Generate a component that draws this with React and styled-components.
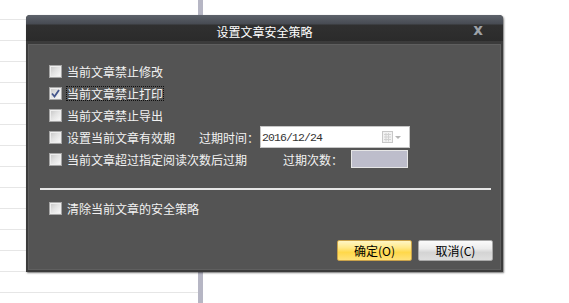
import React from 'react';
import styled, { createGlobalStyle, css } from 'styled-components';

const GlobalStyle = createGlobalStyle`
  html, body { margin: 0; padding: 0; background: #fff; }
  body { font-family: "Noto Sans CJK SC", "Noto Sans", sans-serif; }
  * { box-sizing: border-box; }
`;

const Page = styled.div`
  position: relative;
  width: 569px;
  height: 303px;
  overflow: hidden;
  display: flex;
  background: #fff;
`;

const ListPane = styled.div`
  width: 198px;
  margin-top: -1px;
  display: flex;
  flex-direction: column;
  flex: none;
`;

const ListRow = styled.div`
  flex: none;
  height: 21px;
  border-bottom: 1px solid #e6e6e6;
`;

const VBar = styled.div`
  width: 5px;
  flex: none;
  background: #b6b6c4;
`;

const Dialog = styled.div`
  position: absolute;
  left: 26px;
  top: 15px;
  width: 477px;
  height: 257px;
  background: #3b3b3b;
  border-radius: 4px 4px 0 0;
  box-shadow: 1px 1px 2px rgba(0, 0, 0, 0.55);
  display: flex;
  flex-direction: column;
  padding: 0 2px 2px 2px;
`;

const TitleBar = styled.div`
  margin: 0 -2px;
  height: 26px;
  flex: none;
  border-radius: 4px 4px 0 0;
  background: linear-gradient(to bottom, #5d626b 0px, #474b52 9px, #303030 10px, #2b2b2b 26px);
  display: grid;
  grid-template-columns: 1fr auto 1fr;
  align-items: center;
  padding-top: 8px;
`;

const Title = styled.div`
  grid-column: 2;
  color: #ffffff;
  font-size: 12px;
  line-height: 14px;
`;

const Close = styled.div`
  grid-column: 3;
  justify-self: end;
  margin-right: 20px;
  margin-top: -5px;
  color: #9da2a8;
  font-family: "DejaVu Sans", sans-serif;
  font-weight: bold;
  font-size: 15px;
  line-height: 12px;
`;

const Body = styled.div`
  margin-top: 3px;
  flex: 1;
  background: #545454;
  border: 1px solid #5f5f5f;
  display: flex;
  flex-direction: column;
  padding: 15px 7px 8px 11px;
`;

const Row = styled.div`
  display: flex;
  align-items: center;
  height: 22px;
  padding-left: 9px;
  color: #f2f2f2;
  font-size: 12px;
  flex: none;
`;

const Box = styled.span`
  width: 13px;
  height: 13px;
  flex: none;
  border: 1px solid #a6a6a6;
  background: linear-gradient(135deg, #c4c4c4 0%, #e2e2e2 45%, #fbfbfb 100%);
  box-shadow: inset 0 0 0 1px #eeeeee;
  display: flex;
  align-items: center;
  justify-content: center;
`;

const Label = styled.span`
  margin-left: 5px;
  line-height: 13px;
  white-space: nowrap;
  ${(p) =>
    p.$focused &&
    css`
      outline: 1px dotted #101010;
      outline-offset: 0px;
    `}
`;

const FieldLabel = styled.span`
  margin-left: ${(p) => p.$gap}px;
  white-space: nowrap;
  line-height: 13px;
`;

const DateBox = styled.div`
  margin-left: 1px;
  width: 150px;
  height: 22px;
  background: #fff;
  border: 1px solid #c6c6c6;
  display: flex;
  align-items: center;
  justify-content: space-between;
  padding: 0 7px 0 1px;
`;

const DateText = styled.span`
  font-family: "Liberation Mono", monospace;
  font-size: 11.5px;
  letter-spacing: -0.9px;
  color: #333;
`;

const CountBox = styled.div`
  margin-left: 8px;
  width: 57px;
  height: 18px;
  background: #bdbdcb;
  border: 1px solid #e6e6e6;
`;

const Separator = styled.div`
  height: 2px;
  flex: none;
  margin: 18px 2px 7px 0;
  background: #e6e6e6;
`;

const Buttons = styled.div`
  margin-top: auto;
  display: flex;
  justify-content: flex-end;
  gap: 6px;
`;

const Button = styled.button`
  width: 75px;
  height: 21px;
  padding: 0;
  font-family: "Noto Sans CJK SC", sans-serif;
  font-size: 12px;
  line-height: 19px;
  color: #000;
  border-radius: 2px;
  ${(p) =>
    p.$primary
      ? css`
          border: 1px solid #c9a24a;
          background: linear-gradient(to bottom, #fff6c4 0%, #ffe98a 35%, #ffd84a 60%, #ffe27a 100%);
        `
      : css`
          border: 1px solid #a8a8a8;
          background: linear-gradient(to bottom, #fbfbfb 0%, #ececec 40%, #d4d4d4 60%, #dedede 100%);
        `}
`;

const Check = ({ checked }) => (
  <Box>
    {checked && (
      <svg width="9" height="9" viewBox="0 0 9 9">
        <path d="M1 4.5 L3.5 7.5 L8 1" fill="none" stroke="#44568c" strokeWidth="1.8" />
      </svg>
    )}
  </Box>
);

const CalendarIcon = () => (
  <svg width="20" height="12" viewBox="0 0 20 12">
    <rect x="0.5" y="0.5" width="10" height="11" fill="#f2f2f2" stroke="#c8c8c8" />
    <path d="M2 3.5 H9 M2 6 H9 M2 8.5 H9 M4 2 V10.5 M6.5 2 V10.5" stroke="#d2d2d2" strokeWidth="1" />
    <path d="M13 5 L19 5 L16 8 Z" fill="#b4b4b4" />
  </svg>
);

const listRows = Array.from({ length: 15 });

export default function App() {
  return (
    <>
      <GlobalStyle />
      <Page>
        <ListPane>
          {listRows.map((_, i) => (
            <ListRow key={i} />
          ))}
        </ListPane>
        <VBar />
        <Dialog>
          <TitleBar>
            <Title>设置文章安全策略</Title>
            <Close>x</Close>
          </TitleBar>
          <Body>
            <Row>
              <Check />
              <Label>当前文章禁止修改</Label>
            </Row>
            <Row>
              <Check checked />
              <Label $focused>当前文章禁止打印</Label>
            </Row>
            <Row>
              <Check />
              <Label>当前文章禁止导出</Label>
            </Row>
            <Row>
              <Check />
              <Label>设置当前文章有效期</Label>
              <FieldLabel $gap={24}>过期时间：</FieldLabel>
              <DateBox>
                <DateText>2016/12/24</DateText>
                <CalendarIcon />
              </DateBox>
            </Row>
            <Row>
              <Check />
              <Label>当前文章超过指定阅读次数后过期</Label>
              <FieldLabel $gap={36}>过期次数：</FieldLabel>
              <CountBox />
            </Row>
            <Separator />
            <Row>
              <Check />
              <Label>清除当前文章的安全策略</Label>
            </Row>
            <Buttons>
              <Button $primary>确定(O)</Button>
              <Button>取消(C)</Button>
            </Buttons>
          </Body>
        </Dialog>
      </Page>
    </>
  );
}
